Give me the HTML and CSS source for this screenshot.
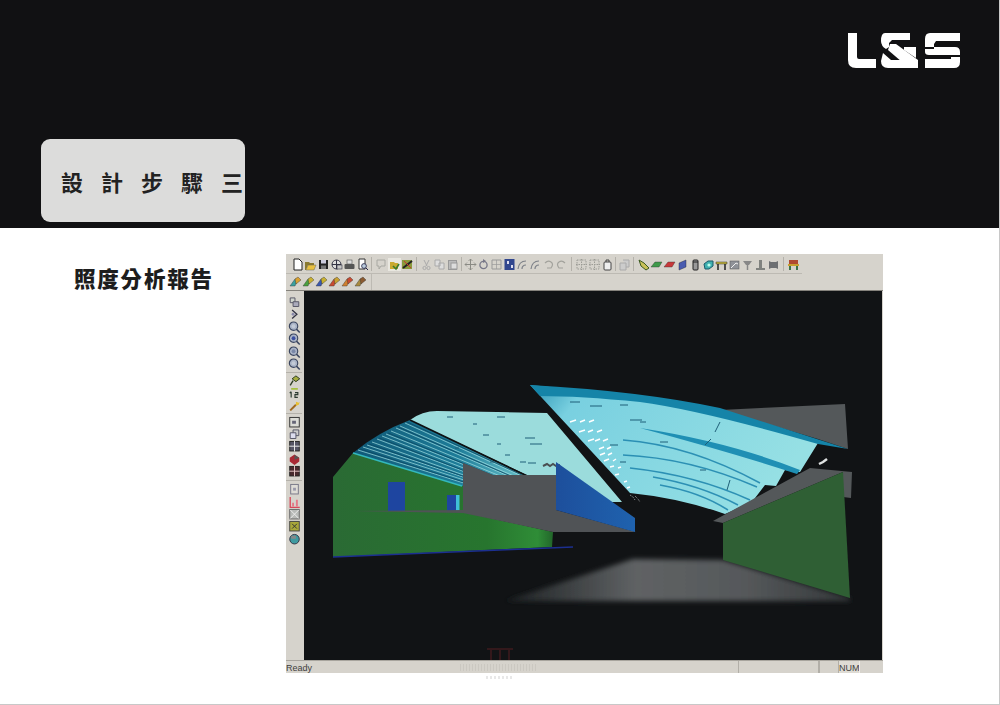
FILE: index.html
```html
<!DOCTYPE html>
<html lang="zh-Hant">
<head>
    <meta charset="UTF-8">
    <meta name="viewport" content="width=device-width, initial-scale=1.0">
    <title>設計步驟三</title>
    <link rel="stylesheet" href="styles.css">
</head>
<body>
    <!-- shared toolbar icons -->
    <svg class="defs" width="0" height="0">
        <symbol id="i-doc" viewBox="0 0 13 13"><path d="M3 1h5l3 3v8H3z" fill="#fff" stroke="#222"/></symbol>
        <symbol id="i-open" viewBox="0 0 13 13"><path d="M1 4h4l1 1h4v2H4l-2 5H1z" fill="#8a7a30"/><path d="M4 7h8l-2 5H2z" fill="#e8c040" stroke="#665"  stroke-width=".5"/></symbol>
        <symbol id="i-save" viewBox="0 0 13 13"><rect x="2" y="2" width="9" height="9" fill="#222"/><rect x="4" y="2" width="5" height="3.5" fill="#ccd"/><rect x="4" y="7.5" width="5" height="3.5" fill="#777"/></symbol>
        <symbol id="i-globe" viewBox="0 0 13 13"><circle cx="6.5" cy="6.5" r="4.5" fill="#ddd" stroke="#334"/><path d="M2 6.5h9M6.5 2v9" stroke="#334"/><rect x="7" y="7" width="5" height="4" fill="#c8c8c8" stroke="#334" stroke-width=".6"/></symbol>
        <symbol id="i-print" viewBox="0 0 13 13"><rect x="4" y="2" width="5" height="4" fill="#ddd" stroke="#555" stroke-width=".6"/><rect x="1.5" y="6" width="10" height="5" rx="1" fill="#555"/></symbol>
        <symbol id="i-prev" viewBox="0 0 13 13"><path d="M3 1h6v10H3z" fill="#fff" stroke="#333"/><circle cx="8" cy="8" r="2.4" fill="#bcd" stroke="#224" stroke-width=".8"/><path d="M10 10l2 2" stroke="#224"/></symbol>
        <symbol id="i-sel" viewBox="0 0 13 13"><path d="M2 2h8v6H6l-2 3V8H2z" fill="none" stroke="#a8a8a2"/></symbol>
        <symbol id="i-pressed" viewBox="0 0 13 13"><rect width="13" height="13" fill="#e9e7e0"/><path d="M2 4h4l1 1h3v6H2z" fill="#c9a92f"/><path d="M5 8l3 3 3-5" stroke="#3a7a2a" stroke-width="1.6" fill="none"/></symbol>
        <symbol id="i-check" viewBox="0 0 13 13"><rect x="1" y="2" width="10" height="9" fill="#8a9a3a"/><path d="M2 10L11 3" stroke="#222" stroke-width="2"/><path d="M3 3l7 7" stroke="#c33" stroke-width="1"/></symbol>
        <symbol id="i-cut" viewBox="0 0 13 13"><path d="M4 2l3 6M9 2L6 8" stroke="#aaa"/><circle cx="4.5" cy="10" r="1.6" fill="none" stroke="#aaa"/><circle cx="8.5" cy="10" r="1.6" fill="none" stroke="#aaa"/></symbol>
        <symbol id="i-copy" viewBox="0 0 13 13"><path d="M2 2h5v6H2zM6 5h5v6H6z" fill="#ddd" stroke="#aaa"/></symbol>
        <symbol id="i-paste" viewBox="0 0 13 13"><rect x="2.5" y="2.5" width="8" height="9" fill="#bbb" stroke="#999"/><rect x="5" y="5" width="6" height="6" fill="#ddd" stroke="#999"/></symbol>
        <symbol id="i-move" viewBox="0 0 13 13"><path d="M6.500 1v11M1 6.500h11" stroke="#8a8a84"/><path d="M4.500 3l2-2 2 2M4.500 10l2 2 2-2M3 4.500l-2 2 2 2M10 4.500l2 2-2 2" fill="none" stroke="#8a8a84" stroke-width=".8"/></symbol>
        <symbol id="i-rot" viewBox="0 0 13 13"><circle cx="6.500" cy="7" r="3.600" fill="none" stroke="#778" stroke-width="1.300"/><path d="M6 1l3 2-3 2z" fill="#778"/></symbol>
        <symbol id="i-scale" viewBox="0 0 13 13"><path d="M2 2h9v9H2z" fill="none" stroke="#999"/><path d="M2 6.500h9M6.500 2v9" stroke="#999" stroke-width=".7"/></symbol>
        <symbol id="i-blue" viewBox="0 0 13 13"><rect x="1.500" y="1" width="10" height="11" fill="#31468e"/><path d="M4 3h2v3H4zM8 7h2v3H8z" fill="#dde"/></symbol>
        <symbol id="i-arc" viewBox="0 0 13 13"><path d="M2 11Q3 3 10 3M6 11Q6 7 10 7" fill="none" stroke="#7d8088" stroke-width="1.200"/></symbol>
        <symbol id="i-undo" viewBox="0 0 13 13"><path d="M3 5q3-3 6-1t0 6H5" fill="none" stroke="#a2a29c" stroke-width="1.200"/></symbol>
        <symbol id="i-redo" viewBox="0 0 13 13"><path d="M10 5q-3-3-6-1t0 6h4" fill="none" stroke="#a2a29c" stroke-width="1.200"/></symbol>
        <symbol id="i-dash" viewBox="0 0 13 13"><path d="M2 2h9v9H2zM6.500 1v11M1 6.500h11" fill="none" stroke="#9c9c96" stroke-dasharray="1.500 1"/></symbol>
        <symbol id="i-bag" viewBox="0 0 13 13"><rect x="3" y="4" width="7" height="8" rx="1" fill="#eee" stroke="#444"/><path d="M5 4V2h3v2" fill="none" stroke="#444"/></symbol>
        <symbol id="i-cube" viewBox="0 0 13 13"><path d="M2 5h6v7H2zM5 2h6v7H8" fill="#ccc" stroke="#aaa"/></symbol>
        <symbol id="i-pencil" viewBox="0 0 13 13"><path d="M2 2l2 6 5 4 3-2-5-5z" fill="#c9c05a" stroke="#3a5a20"/></symbol>
        <symbol id="i-plate" viewBox="0 0 13 13"><path d="M1 9l4-5h7L9 9z" fill="var(--a)" stroke="#333" stroke-width=".4"/></symbol>
        <symbol id="i-panel" viewBox="0 0 13 13"><path d="M3 5l7-3v7l-7 3z" fill="#4a5cb0" stroke="#223" stroke-width=".4"/></symbol>
        <symbol id="i-cyl" viewBox="0 0 13 13"><rect x="4" y="2" width="5" height="10" rx="1" fill="#999" stroke="#222"/><path d="M4 4h5" stroke="#222"/></symbol>
        <symbol id="i-blob" viewBox="0 0 13 13"><path d="M2 6l4-3h5v5l-4 3H3z" fill="#3fb0b0" stroke="#1a5a6a"/><circle cx="7" cy="7" r="1.600" fill="#bfe"/></symbol>
        <symbol id="i-table" viewBox="0 0 13 13"><path d="M1 4h11v2H1z" fill="#c8b83a" stroke="#333" stroke-width=".5"/><path d="M3 6v6M10 6v6" stroke="#222" stroke-width="1.500"/></symbol>
        <symbol id="i-img" viewBox="0 0 13 13"><rect x="2" y="3" width="9" height="8" fill="#8f9298" stroke="#555" stroke-width=".5"/><path d="M3 10l5-5 2 1" fill="none" stroke="#eee"/></symbol>
        <symbol id="i-tree" viewBox="0 0 13 13"><path d="M2 3h9L8 7H5z" fill="#888"/><path d="M6.500 7v5" stroke="#888" stroke-width="1.500"/></symbol>
        <symbol id="i-stand" viewBox="0 0 13 13"><path d="M5 2h3v8H5zM2 10h9v2H2z" fill="#80827f"/></symbol>
        <symbol id="i-hbar" viewBox="0 0 13 13"><path d="M2 3l2 1h5l2-1v8l-2-1H4l-2 1z" fill="#6d6f72"/></symbol>
        <symbol id="i-chair" viewBox="0 0 13 13"><path d="M2 2h9v4H2z" fill="#b04a30"/><path d="M1 6h11v2H1z" fill="#c8a030"/><path d="M3 8v4M10 8v4" stroke="#2a6a3a" stroke-width="1.800"/></symbol>
        <symbol id="i-wedge" viewBox="0 0 13 13"><path d="M1 11l5-7h3l-3 7z" fill="var(--a)" stroke="#333" stroke-width=".4"/><path d="M6 4l3-2 3 3-5 4z" fill="var(--b)" stroke="#333" stroke-width=".4"/></symbol>
        <symbol id="i-stack" viewBox="0 0 13 13"><path d="M2 2h5v5H2z" fill="#cfd3cc" stroke="#556"/><path d="M5 6h6v5H5z" fill="#aab" stroke="#556"/></symbol>
        <symbol id="i-back" viewBox="0 0 13 13"><path d="M4 2l5 4.500-5 4.500" fill="none" stroke="#334" stroke-width="1.400"/><circle cx="5" cy="6.500" r="1.500" fill="#88a"/></symbol>
        <symbol id="i-mag" viewBox="0 0 13 13"><circle cx="5.500" cy="5.500" r="4.400" fill="#a9b3c6" stroke="#3b4660" stroke-width="1.200"/><circle cx="5.500" cy="5.500" r="2" fill="var(--a)"/><path d="M8.500 8.500l3.500 3.500" stroke="#3b4660" stroke-width="1.600"/></symbol>
        <symbol id="i-olive" viewBox="0 0 13 13"><path d="M4 5l4-3 4 3-4 3z" fill="#a6ad3f" stroke="#2b3a20"/><path d="M5 7l-3 5" stroke="#2b3a20" stroke-width="1.400"/></symbol>
        <symbol id="i-onetwo" viewBox="0 0 13 13"><path d="M3 6v6M3 6L1.500 7.500M7 7h3v2H7v3h3" fill="none" stroke="#2b3a30" stroke-width="1.200"/><path d="M3 3h7" stroke="#a6c040" stroke-width="2"/></symbol>
        <symbol id="i-wand" viewBox="0 0 13 13"><path d="M2 12l6-6" stroke="#a06a20" stroke-width="2"/><path d="M8 3l3 1 1-1-1 3-3 1z" fill="#e8c030"/></symbol>
        <symbol id="i-frame" viewBox="0 0 13 13"><rect x="1.500" y="1.500" width="10" height="10" fill="#dcdcd6" stroke="#333"/><path d="M4 5h4v3H4z" fill="#667"/></symbol>
        <symbol id="i-wins" viewBox="0 0 13 13"><path d="M5 2h6v6H5z" fill="#ccc" stroke="#556"/><path d="M2 5h6v6H2z" fill="#dde" stroke="#556"/></symbol>
        <symbol id="i-grid" viewBox="0 0 13 13"><rect x="1.500" y="1.500" width="10" height="10" fill="#556" stroke="#222"/><path d="M6.500 1v11M1 6.500h11" stroke="#eee"/></symbol>
        <symbol id="i-rcube" viewBox="0 0 13 13"><path d="M1.500 5l5-3.500 5 3.500v4l-5 3.500-5-3.500z" fill="#a82a35"/><path d="M6.500 2v5l5-2" fill="#555"/></symbol>
        <symbol id="i-rgrid" viewBox="0 0 13 13"><rect x="1.500" y="1.500" width="10" height="10" fill="#4a2a2e" stroke="#222"/><path d="M6.500 1v11M1 6.500h11" stroke="#e8c8c8"/></symbol>
        <symbol id="i-doc2" viewBox="0 0 13 13"><rect x="2.500" y="1.500" width="8" height="10" fill="#dedcd6" stroke="#778"/><rect x="5" y="5" width="3" height="3" fill="#99a"/></symbol>
        <symbol id="i-chart" viewBox="0 0 13 13"><path d="M2 1v11h10" fill="none" stroke="#d8485a" stroke-width="1.400"/><path d="M4 11V7h2v4zM8 11V4h2v7z" fill="#e57a88"/></symbol>
        <symbol id="i-grimg" viewBox="0 0 13 13"><rect x="1.500" y="1.500" width="10" height="10" fill="#b8bbb8" stroke="#666"/><path d="M2 11L11 2M2 2l9 9" stroke="#eee"/></symbol>
        <symbol id="i-ysq" viewBox="0 0 13 13"><rect x="1.500" y="1.500" width="10" height="10" fill="#a9a83a" stroke="#444"/><path d="M4 4l5 5M9 4L4 9" stroke="#333"/></symbol>
        <symbol id="i-tglobe" viewBox="0 0 13 13"><circle cx="6.500" cy="6.500" r="5" fill="#3f9aa0" stroke="#334"/><path d="M3 3h5v3H3z" fill="#888"/></symbol>
    </svg>

    <div class="page">
        <header class="banner">
            <svg class="logo" viewBox="0 0 112 35" width="112" height="35" role="img" aria-label="L&amp;S">
                <path d="M0 0H9V24Q9 26 11 26H28V35H8Q0 35 0 27Z"/>
                <path d="M37 0H62V7H44L41 10V14L38 16Q33 13 33 8Q33 0 37 0Z"/>
                <path d="M42 11H48L70 27V35H61L40 17Z"/>
                <path d="M35 20L43 27H56L62 35H40Q33 35 33 28Z"/>
                <path d="M56 14H68V25L56 17Z"/>
                <path d="M82 0H112V8H88L86 11V14H77V6Q77 0 82 0Z"/>
                <path d="M77 16H86V14H107Q112 14 112 19V22H81Q77 22 77 19Z"/>
                <path d="M77 26H103V24H112V29Q112 35 106 35H77Z"/>
            </svg>
            <div class="step-box"><h2 class="step-title">設計步驟三</h2></div>
        </header>

        <main class="content">
            <div class="side"><h1 class="report-title">照度分析報告</h1></div>

            <div class="app">
                <div class="toolbar row-one">
                    <svg class="ico"><use href="#i-doc"/></svg>
                    <svg class="ico"><use href="#i-open"/></svg>
                    <svg class="ico"><use href="#i-save"/></svg>
                    <svg class="ico"><use href="#i-globe"/></svg>
                    <svg class="ico"><use href="#i-print"/></svg>
                    <svg class="ico"><use href="#i-prev"/></svg>
                    <span class="sep"></span>
                    <svg class="ico"><use href="#i-sel"/></svg>
                    <svg class="ico"><use href="#i-pressed"/></svg>
                    <svg class="ico"><use href="#i-check"/></svg>
                    <span class="sep"></span>
                    <svg class="ico"><use href="#i-cut"/></svg>
                    <svg class="ico"><use href="#i-copy"/></svg>
                    <svg class="ico"><use href="#i-paste"/></svg>
                    <span class="sep sep-sm"></span>
                    <svg class="ico"><use href="#i-move"/></svg>
                    <svg class="ico"><use href="#i-rot"/></svg>
                    <svg class="ico"><use href="#i-scale"/></svg>
                    <svg class="ico"><use href="#i-blue"/></svg>
                    <svg class="ico"><use href="#i-arc"/></svg>
                    <svg class="ico"><use href="#i-arc"/></svg>
                    <svg class="ico"><use href="#i-undo"/></svg>
                    <svg class="ico"><use href="#i-redo"/></svg>
                    <span class="sep sep-lg"></span>
                    <svg class="ico"><use href="#i-dash"/></svg>
                    <svg class="ico"><use href="#i-dash"/></svg>
                    <svg class="ico"><use href="#i-bag"/></svg>
                    <span class="sep sep-xs"></span>
                    <svg class="ico"><use href="#i-cube"/></svg>
                    <span class="sep"></span>
                    <svg class="ico"><use href="#i-pencil"/></svg>
                    <svg class="ico green"><use href="#i-plate"/></svg>
                    <svg class="ico red"><use href="#i-plate"/></svg>
                    <svg class="ico"><use href="#i-panel"/></svg>
                    <svg class="ico"><use href="#i-cyl"/></svg>
                    <svg class="ico"><use href="#i-blob"/></svg>
                    <svg class="ico"><use href="#i-table"/></svg>
                    <svg class="ico"><use href="#i-img"/></svg>
                    <svg class="ico"><use href="#i-tree"/></svg>
                    <svg class="ico"><use href="#i-stand"/></svg>
                    <svg class="ico"><use href="#i-hbar"/></svg>
                    <span class="sep sep-lg"></span>
                    <svg class="ico"><use href="#i-chair"/></svg>
                </div>

                <div class="toolbar row-two">
                    <svg class="ico w1"><use href="#i-wedge"/></svg>
                    <svg class="ico w2"><use href="#i-wedge"/></svg>
                    <svg class="ico w3"><use href="#i-wedge"/></svg>
                    <svg class="ico w4"><use href="#i-wedge"/></svg>
                    <svg class="ico w5"><use href="#i-wedge"/></svg>
                    <svg class="ico w6"><use href="#i-wedge"/></svg>
                </div>

                <div class="workspace">
                    <div class="sidebar">
                        <svg class="ico"><use href="#i-stack"/></svg>
                        <svg class="ico"><use href="#i-back"/></svg>
                        <svg class="ico m1"><use href="#i-mag"/></svg>
                        <svg class="ico m2"><use href="#i-mag"/></svg>
                        <svg class="ico m3"><use href="#i-mag"/></svg>
                        <svg class="ico m1"><use href="#i-mag"/></svg>
                        <span class="vsep"></span>
                        <svg class="ico"><use href="#i-olive"/></svg>
                        <svg class="ico"><use href="#i-onetwo"/></svg>
                        <svg class="ico"><use href="#i-wand"/></svg>
                        <span class="vsep vsep-md"></span>
                        <svg class="ico"><use href="#i-frame"/></svg>
                        <svg class="ico"><use href="#i-wins"/></svg>
                        <svg class="ico"><use href="#i-grid"/></svg>
                        <svg class="ico"><use href="#i-rcube"/></svg>
                        <svg class="ico"><use href="#i-rgrid"/></svg>
                        <span class="vsep vsep-lg"></span>
                        <svg class="ico"><use href="#i-doc2"/></svg>
                        <svg class="ico"><use href="#i-chart"/></svg>
                        <svg class="ico"><use href="#i-grimg"/></svg>
                        <svg class="ico"><use href="#i-ysq"/></svg>
                        <svg class="ico"><use href="#i-tglobe"/></svg>
                    </div>

                    <!-- scene uses page coordinates, easier to read off the shot -->
                    <svg class="scene" viewBox="304 291 578 369" width="578" height="369">
                        <defs>
                            <linearGradient id="g-wall" x1="0" x2="1" y1="0" y2="0">
                                <stop offset="0" stop-color="#2a6a34"/>
                                <stop offset=".7" stop-color="#27752e"/>
                                <stop offset=".93" stop-color="#2f8d37"/>
                                <stop offset="1" stop-color="#22662a"/>
                            </linearGradient>
                            <linearGradient id="g-fan" x1="0" x2="1" y1="0" y2="0">
                                <stop offset="0" stop-color="#0f5876"/>
                                <stop offset=".6" stop-color="#1d7c98"/>
                                <stop offset="1" stop-color="#6cc4cc"/>
                            </linearGradient>
                            <linearGradient id="g-roof" x1="0" x2="1" y1="0" y2=".35">
                                <stop offset="0" stop-color="#2a93b4"/>
                                <stop offset=".18" stop-color="#79d0e0"/>
                                <stop offset="1" stop-color="#96e0e4"/>
                            </linearGradient>
                            <linearGradient id="g-blue" x1="0" x2="1" y1="0" y2="0">
                                <stop offset="0" stop-color="#1d4f9c"/>
                                <stop offset="1" stop-color="#1f62ae"/>
                            </linearGradient>
                            <linearGradient id="g-floor" x1="0" x2="1" y1="0" y2="0">
                                <stop offset="0" stop-color="#1d2123"/>
                                <stop offset=".38" stop-color="#5f6264"/>
                                <stop offset=".7" stop-color="#55585a"/>
                                <stop offset="1" stop-color="#34383a"/>
                            </linearGradient>
                            <filter id="soft" x="-10%" y="-30%" width="120%" height="160%"><feGaussianBlur stdDeviation="2.500"/></filter>
                        </defs>

                        <path d="M505 601L633 559L723 560L850 598V601Z" fill="url(#g-floor)" filter="url(#soft)"/>

                        <!-- left wall -->
                        <path d="M333 477L353 453L463 486V512L553 532L552 547L333 557Z" fill="url(#g-wall)"/>
                        <path d="M333 557L573 547" stroke="#1c2f90" stroke-width="1.600"/>
                        <path d="M388 482h17v29h-17zM447 495h9v16h-9z" fill="#1e45a0"/>
                        <path d="M456 495h3.500v16H456z" fill="#3fc0d8"/>

                        <!-- left ceiling -->
                        <path d="M353 453Q378 432 410 420L527 476L462 486Z" fill="url(#g-fan)"/>
                        <path d="M410 420Q422 411 437 411L547 413L622 502H556L527 475Z" fill="#9bdcdc"/>
                        <g class="fan-light">
                            <path d="M358 450L467 484M363 447L473 483M367 445L478 482M372 442L483 482M377 439L489 481M382 436L494 480M386 434L500 479M391 431L505 478M396 428L511 477M400 426L516 477M405 423L522 476"/>
                        </g>
                        <g class="fan-dark">
                            <path d="M360 449L470 484M369 444L480 482M379 438L491 481M388 433L502 479M398 427L513 477M407 422L524 476"/>
                        </g>
                        <path d="M353 453L462 486" stroke="#33b8bc" stroke-width="1.500"/>
                        <path d="M410 420L527 476" stroke="#0e1113" stroke-width="1.800"/>
                        <g class="specks">
                            <path d="M447 417h6M497 417h8M483 435h6M497 444h4M525 438h10M530 444h12M520 462h6M505 455h5M528 463h8M490 462h4M455 448h4M473 424h4"/>
                        </g>
                        <path d="M543 466l4-2 3 2 3-2 3 2 4-1" fill="none" stroke="#4a4f52" stroke-width="2"/>

                        <!-- grey block and the blue return -->
                        <path d="M463 463L493 475H556V510L636 532L553 532L463 513L353 511L463 510Z" fill="#505356"/>
                        <path d="M556 462L635 518V532L556 510Z" fill="url(#g-blue)"/>

                        <!-- right ceiling -->
                        <path d="M720 410L845 404L848 449L818 439Z" fill="#54585a"/>
                        <path d="M530 385C600 392 680 400 720 412L818 443L800 472L785 470L776 486L765 485L752 502L740 507L732 511L725 514Q680 498 630 493Z" fill="url(#g-roof)"/>
                        <path d="M530 385Q640 391 720 408L848 449L818 444Q700 410 640 402Q580 396 540 396Z" fill="#1584a8"/>
                        <path d="M640 428Q730 442 800 470L797 474Q730 452 640 428Z" fill="#1f8fb4"/>
                        <g class="roof-lines">
                            <path d="M623 440Q690 445 760 483"/>
                            <path d="M623 455Q690 458 757 487"/>
                            <path d="M630 468Q695 475 750 500"/>
                            <path d="M653 477Q700 485 738 505"/>
                            <path d="M660 485Q700 492 728 510"/>
                        </g>
                        <g class="specks">
                            <path d="M570 402h10M590 406h12M620 405h8M630 420h12M640 422h6M715 432l5-10M705 445l6-6M610 445h8M660 442h8M620 462h6M700 470h6M727 490l3-10"/>
                        </g>
                        <path class="arrows" d="M570 422l6-2M580 422l5-2M589 422l5-2M579 432l6-2M588 432l5-2M597 432l5-2M588 441l6-2M595 441l5-2M603 441l5-2M599 449l5-2M607 449l4-2M600 455l5-2M608 455l4-2M604 461l5-2M613 461l3-2M610 467l4-1M618 468l3-1M615 475l4-1M624 482l3-1M627 488l3-1"/>
                        <path d="M630 495l3 2 2 3M635 496l3 3 2 3" fill="none" stroke="#9a9d9f" stroke-width="1" stroke-dasharray="1 1"/>
                        <path d="M819 464l4-2 4-3" stroke="#dfe2e2" stroke-width="2.500"/>

                        <!-- right wall -->
                        <path d="M713 521L810 468L852 472L851 498L843 497V472L723 523Z" fill="#54585a"/>
                        <path d="M723 523L843 472L850 598L723 560Z" fill="#2f5f34"/>

                        <!-- faint watermark -->
                        <path d="M487 649h26M491 649v11M500 649v11M509 649v11" fill="none" stroke="#33181b" stroke-width="2"/>
                    </svg>
                </div>

                <div class="statusbar">
                    <span class="status-text">Ready</span>
                    <span class="status-mark"></span>
                    <span class="status-mark-sub"></span>
                    <span class="panel panel-wide"></span>
                    <span class="panel panel-small"></span>
                    <span class="panel panel-num">NUM</span>
                    <span class="panel panel-end"></span>
                </div>
            </div>
        </main>
    </div>
</body>
</html>
```

FILE: styles.css
```css
html, body { margin: 0; padding: 0; background: #fff; }
.defs { position: absolute; }

.page {
    width: 1000px;
    height: 705px;
    box-sizing: border-box;
    border-right: 1px solid #c8c8c8;
    border-bottom: 1px solid #c8c8c8;
    overflow: hidden;
    display: flex;
    flex-direction: column;
}

/* black banner */
.banner {
    height: 228px;
    flex: none;
    box-sizing: border-box;
    background: #111113;
    padding: 33px 39px 6px 41px;
    display: flex;
    flex-direction: column;
}
.logo { align-self: flex-end; fill: #fff; }
.step-box {
    margin-top: auto;
    width: 204px;
    height: 83px;
    box-sizing: border-box;
    padding-left: 20px;
    background: #dcdcdb;
    border-radius: 9px;
    display: flex;
    align-items: center;
}
.step-title {
    margin: 0 -18px 0 0;
    font-family: "Noto Sans CJK TC", "Liberation Sans", sans-serif;
    font-size: 22px;
    font-weight: 700;
    letter-spacing: 18px;
    line-height: 1;
    white-space: nowrap;
    color: #222;
}

.content { display: flex; padding-top: 26px; }
.side { width: 286px; flex: none; box-sizing: border-box; padding: 9px 0 0 74px; }
.report-title {
    margin: 0;
    font-family: "Noto Sans CJK TC", "Liberation Sans", sans-serif;
    font-size: 21.500px;
    font-weight: 900;
    letter-spacing: 1.800px;
    line-height: 1.4;
    white-space: nowrap;
    color: #1d1d1d;
}

/* the application window */
.app {
    position: relative;
    width: 597px;
    height: 419px;
    background: #d6d3cc;
    display: flex;
    flex-direction: column;
    font-family: "Liberation Sans", sans-serif;
}
.toolbar { display: flex; align-items: center; flex: none; box-sizing: border-box; }
.ico { width: 13px; height: 13px; flex: none; filter: blur(.4px); }
.row-one {
    height: 19px;
    width: 516px;
    margin-top: 1px;
    padding-left: 4.500px;
    border-bottom: 1px solid #bdbab3;
}
.row-two {
    height: 17px;
    width: 86px;
    padding-left: 2.500px;
    padding-bottom: 2px;
    border-right: 1px solid #bdbab3;
}
.row-two .ico { margin-right: .2px; }
.sep { width: 6px; height: 14px; flex: none; background: linear-gradient(#b4b1aa, #b4b1aa) center / 1px 100% no-repeat; }
.sep-xs { width: 4px; }
.sep-sm { width: 5px; }
.sep-lg { width: 7px; }

.green { --a: #3f9a4a; }
.red { --a: #c8383a; }
.w1 { --a: #3aa0a0; --b: #d8a030; }
.w2 { --a: #4aa040; --b: #c8b030; }
.w3 { --a: #3a58b0; --b: #c8b030; }
.w4 { --a: #c84a30; --b: #c8a030; }
.w5 { --a: #d08030; --b: #c84a30; }
.w6 { --a: #a88a40; --b: #8a5a30; }
.m1 { --a: #c3cad6; }
.m2 { --a: #3b4fa0; }
.m3 { --a: #7a88a8; }

.workspace { display: flex; flex: none; height: 369px; border-top: 1px solid #85827c; box-sizing: content-box; margin-top: -1px; }
.sidebar {
    width: 18px;
    flex: none;
    box-sizing: border-box;
    padding: 5px 2px 0 0;
    display: flex;
    flex-direction: column;
    align-items: center;
}
.sidebar .ico { height: 12.400px; }
.vsep { height: 3.600px; width: 16px; flex: none; background: linear-gradient(#b4b1aa, #b4b1aa) center / 100% 1px no-repeat; }
.vsep-md { height: 4.600px; }
.vsep-lg { height: 5.600px; }

.scene { display: block; flex: none; background: #111315; filter: blur(.5px); }
.fan-light path { stroke: #a4e0e2; stroke-width: .7; fill: none; }
.fan-dark path { stroke: #0b4763; stroke-width: .8; fill: none; }
.specks path { stroke: #1f5f78; stroke-width: 1; fill: none; }
.roof-lines path { stroke: #1b83ab; stroke-width: 1.500; fill: none; opacity: .85; }
.arrows { stroke: #fff; stroke-width: 1.500; fill: none; }

/* status bar */
.statusbar {
    position: relative;
    flex: none;
    height: 13px;
    box-sizing: border-box;
    display: flex;
    align-items: flex-start;
    border-top: 1px solid #a8a59e;
    font-size: 9px;
    color: #3f3f3d;
}
.status-text { flex: none; width: 452px; height: 12px; line-height: 14px; }
.status-mark {
    position: absolute;
    left: 174px;
    top: 3px;
    width: 78px;
    height: 7px;
    background: repeating-linear-gradient(90deg, #cbc8c1 0 1px, transparent 1px 3px);
}
.status-mark-sub {
    position: absolute;
    left: 200px;
    top: 15px;
    width: 26px;
    height: 3px;
    background: repeating-linear-gradient(90deg, #e8e8e8 0 2px, transparent 2px 4px);
}
.panel { box-sizing: border-box; height: 12px; flex: none; border-left: 1px solid #b2afa8; text-align: center; line-height: 14px; }
.panel-wide { width: 81px; border-right: 1px solid #b2afa8; }
.panel-small { width: 19px; }
.panel-num { width: 21px; background: #dedbd4; }
.panel-end { width: 24px; border-left: 1px solid #eeece6; }
```
